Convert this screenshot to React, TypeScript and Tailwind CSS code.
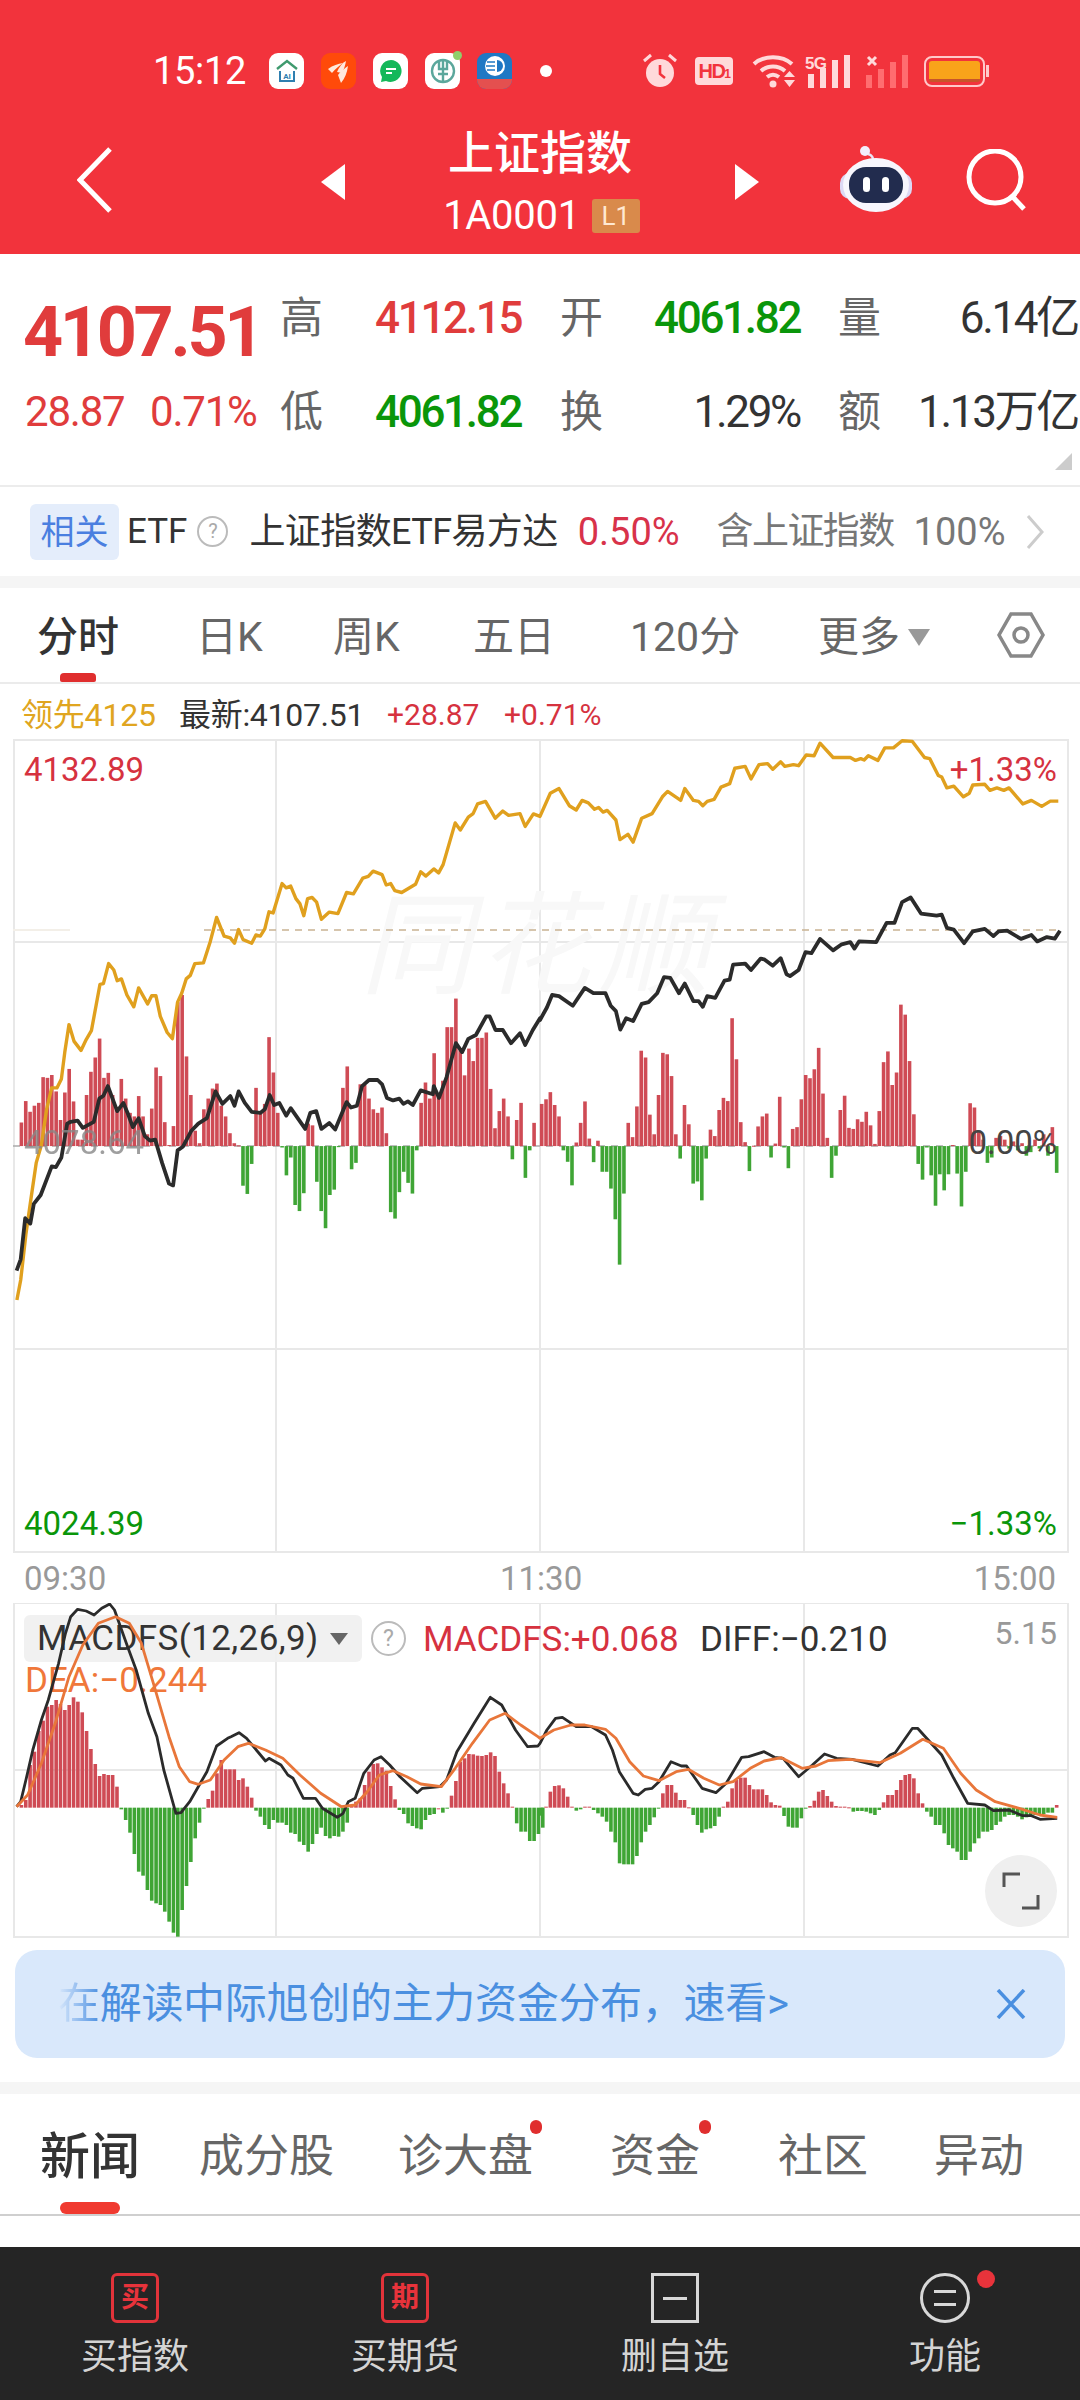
// Index quote detail page: header, quote table, intraday chart, MACD panel, tabs and action bar
type Pt = [number, number];

const FONT = "font-[Roboto,'Noto_Sans_CJK_SC',sans-serif]";

// chart traces are read off the picture in two halves, left half starts at x=0 and right half at x=540
const goldL: Pt[] = [[49,1624],[60,1568],[75,1440],[90,1340],[105,1240],[120,1190],[135,1090],[150,1030],[165,1030],[178,1005],[188,930],[200,853],[215,900],[235,925],[250,895],[265,870],[290,740],[300,738],[315,682],[330,700],[340,730],[352,725],[368,770],[388,803],[402,750],[428,795],[440,772],[452,772],[465,830],[485,875],[500,892],[515,790],[527,765],[540,725],[552,715],[565,682],[590,680],[610,620],[628,553],[650,605],[668,610],[680,625],[692,587],[705,615],[730,625],[742,602],[755,605],[768,585],[780,537],[792,540],[818,458],[830,470],[843,465],[858,500],[870,515],[881,548],[892,500],[905,497],[918,510],[932,558],[955,538],[980,542],[1005,483],[1025,487],[1052,443],[1068,438],[1082,423],[1108,433],[1120,462],[1133,458],[1145,478],[1165,483],[1205,460],[1220,425],[1235,437],[1258,417],[1272,428],[1285,405],[1320,288],[1335,308],[1358,272],[1372,262],[1385,235],[1408,228],[1436,275],[1458,255],[1475,267],[1508,262],[1523,298],[1547,263],[1566,270]];
const goldR: Pt[] = [[0,270],[30,205],[55,192],[85,240],[105,252],[122,225],[140,232],[158,250],[170,245],[183,258],[195,253],[220,280],[232,335],[255,320],[270,342],[295,275],[325,262],[355,215],[370,200],[408,225],[420,192],[445,225],[460,228],[472,240],[485,228],[505,222],[525,188],[550,178],[565,135],[595,130],[612,165],[635,125],[660,122],[675,138],[698,117],[710,130],[735,125],[750,128],[772,98],[795,100],[812,65],[850,105],[900,105],[915,113],[930,108],[940,112],[952,100],[980,113],[1000,78],[1025,78],[1050,58],[1080,60],[1115,105],[1130,108],[1155,155],[1165,160],[1180,190],[1200,185],[1228,215],[1245,205],[1255,182],[1290,180],[1305,197],[1325,190],[1345,197],[1360,190],[1400,235],[1425,225],[1455,242],[1480,227],[1503,227]];
const blackL: Pt[] = [[48,1542],[60,1510],[73,1395],[88,1410],[98,1355],[118,1330],[150,1250],[162,1252],[178,1225],[195,1130],[205,1125],[225,1122],[240,1142],[272,1125],[288,1060],[300,1052],[313,1025],[340,1095],[358,1072],[370,1100],[385,1140],[402,1115],[420,1165],[435,1178],[450,1175],[470,1240],[490,1298],[502,1303],[515,1205],[530,1195],[555,1150],[575,1130],[600,1115],[625,1040],[645,1075],[668,1053],[680,1080],[692,1040],[710,1072],[730,1097],[755,1100],[768,1090],[782,1050],[795,1078],[810,1072],[830,1108],[843,1087],[885,1145],[900,1100],[917,1095],[932,1145],[955,1128],[972,1147],[1005,1070],[1018,1085],[1035,1080],[1050,1025],[1070,1008],[1095,1008],[1108,1020],[1122,1058],[1140,1065],[1158,1060],[1170,1075],[1183,1068],[1197,1078],[1220,1037],[1255,1048],[1258,1025],[1273,1058],[1295,1000],[1322,905],[1340,930],[1358,893],[1380,882],[1410,830],[1420,830],[1437,868],[1458,868],[1482,905],[1508,877],[1523,910],[1545,868],[1566,835]];
const blackR: Pt[] = [[0,840],[20,805],[35,770],[55,773],[95,800],[130,750],[155,765],[190,765],[205,800],[220,815],[233,867],[250,835],[270,843],[295,795],[315,790],[340,765],[360,720],[378,722],[403,765],[420,738],[445,787],[460,787],[472,803],[485,773],[508,778],[535,730],[550,727],[560,685],[595,682],[612,700],[640,668],[650,670],[675,688],[698,667],[715,712],[725,717],[750,700],[770,650],[787,653],[812,613],[850,645],[875,628],[900,622],[912,640],[925,620],[975,622],[1005,568],[1028,568],[1050,510],[1075,497],[1105,542],[1150,548],[1165,545],[1180,582],[1200,587],[1230,625],[1255,592],[1290,585],[1315,605],[1330,592],[1355,590],[1395,613],[1425,602],[1442,620],[1470,608],[1493,612],[1508,590]];

// bar tops in the same crop units, a negative number is a bar going down
const volL = [1127,1067,1097,1080,1072,1000,1002,994,1040,1120,1043,977,1068,1175,1175,1050,985,945,892,1002,988,1050,1090,1005,1060,1100,1110,1053,1110,1160,1088,973,997,1126,1190,1137,790,770,942,1050,1150,1185,1090,1060,1032,1018,1080,1110,1157,1185,1191,-1304,-1327,-1243,1030,1100,1075,888,987,1100,-1197,-1275,-1225,-1358,-1375,-1325,1130,1135,-1293,-1375,-1423,-1330,-1315,-1196,1030,970,-1258,-1240,1020,1022,1060,1090,1100,1085,1157,-1378,-1396,-1322,-1265,-1296,-1326,-1205,1072,1015,1060,933,1045,1010,860,860,780,925,995,920,955,890,890,875,1033,1143,1095,1060,1110,-1230,1120,1072,-1282,-1205,1128];
const volR = [1075,1062,1042,1078,1110,-1205,-1237,-1303,1183,1128,1068,1172,-1238,1178,-1265,-1265,-1312,-1398,-1525,-1326,1128,1168,1082,926,945,1105,1160,1050,932,936,997,1160,-1228,1078,1132,-1298,-1292,-1345,-1228,1147,1165,1092,1058,1067,835,950,1126,1182,-1263,1192,1138,1110,1102,-1225,1186,1055,-1197,-1255,1145,1140,1062,994,1003,978,918,1046,1170,-1282,-1220,1092,1052,1142,1145,1118,1125,1097,1135,1187,1095,958,928,1022,987,797,825,955,1104,-1243,-1287,-1197,-1275,-1360,-1272,-1317,-1272,1190,-1270,-1362,-1265,1073,1085,1150,1175,-1240,-1225,1170,1165,1175,-1200,1180,-1205,1185,-1220,-1210,1175,-1200,1160,-1220,1140,-1268];

const macdBlackL: Pt[] = [[48,830],[60,815],[75,750],[95,660],[120,570],[140,510],[170,400],[190,310],[205,260],[225,238],[250,243],[273,255],[295,235],[318,222],[332,240],[370,350],[395,420],[430,550],[455,620],[475,720],[510,850],[525,848],[550,815],[600,725],[628,648],[660,625],[670,620],[693,608],[715,625],[770,693],[780,685],[815,705],[835,735],[850,745],[880,805],[915,805],[935,835],[978,862],[995,850],[1010,815],[1030,805],[1055,730],[1085,690],[1105,680],[1130,705],[1160,740],[1210,788],[1225,775],[1275,770],[1295,750],[1325,665],[1375,580],[1422,502],[1455,525],[1495,600],[1530,650],[1560,648]];
const macdBlackR: Pt[] = [[0,640],[20,600],[45,565],[65,562],[105,590],[150,590],[190,615],[210,660],[230,725],[270,790],[285,795],[305,778],[325,775],[345,755],[380,695],[410,708],[425,708],[470,775],[510,788],[540,760],[585,682],[605,680],[650,665],[680,682],[705,685],[750,740],[790,705],[825,672],[860,685],[905,688],[980,708],[1015,675],[1030,668],[1080,595],[1095,595],[1165,675],[1200,745],[1240,820],[1290,825],[1315,842],[1360,840],[1400,857],[1425,857],[1450,868],[1500,865]];
const macdOrangeL: Pt[] = [[48,830],[80,795],[120,700],[160,580],[200,440],[240,345],[285,280],[335,260],[375,280],[410,340],[445,460],[490,620],[520,710],[550,755],[575,763],[610,750],[650,690],[690,650],[720,640],[770,660],[820,685],[870,735],[930,790],[990,830],[1030,825],[1065,785],[1100,735],[1140,722],[1180,740],[1220,762],[1280,770],[1320,715],[1370,640],[1420,570],[1465,550],[1510,585],[1560,620]];
const macdOrangeR: Pt[] = [[0,625],[40,600],[90,585],[130,585],[190,598],[220,625],[260,695],[300,738],[345,752],[395,725],[430,718],[475,745],[520,765],[560,755],[610,715],[650,693],[700,683],[760,715],[800,708],[835,692],[900,688],[985,698],[1045,670],[1110,628],[1170,655],[1220,730],[1265,780],[1320,815],[1390,835],[1450,855],[1500,862]];

const macdBarsL = [825,810,705,665,603,572,530,525,510,522,540,525,502,515,547,603,657,702,738,732,735,735,770,-838,-870,-908,-972,-1025,-1037,-1080,-1112,-1120,-1125,-1145,-1175,-1208,-1220,-1140,-1068,-996,-925,-878,-836,807,782,730,690,718,718,718,750,745,770,803,-842,-860,-885,-897,-870,-878,-878,-885,-908,-912,-935,-945,-965,-942,-912,-893,-918,-925,-918,-920,-905,-878,825,815,805,765,725,702,700,712,722,768,808,-840,-852,-880,-888,-895,-898,-870,-855,-852,835,-848,-836,797,753,695,685,672,673,677,678,675,667,678,725,760,790,830,-880,-905,-905,-933,-933,-912,-893];
const macdBarsR = [-857,830,785,768,766,775,800,830,-842,-838,830,830,-840,-850,-860,-875,-905,-937,-1000,-1003,-1003,-1003,-978,-937,-905,-885,-862,-836,790,765,765,788,810,810,832,-855,-885,-908,-898,-895,-888,-860,830,815,775,750,743,743,765,778,778,778,795,817,825,827,-858,-890,-893,-893,-865,-835,828,812,785,780,798,815,828,830,830,832,-845,-843,-843,-845,-850,-855,-840,817,795,795,780,750,735,732,745,790,820,-845,-860,-885,-885,-910,-945,-955,-965,-990,-990,-965,-940,-925,-905,-905,-900,-885,-875,-860,-855,-855,-860,-868,-862,-855,-855,-855,-852,-848,-848,825];

const trace = (left: Pt[], right: Pt[], oy: number, sy: number) =>
  [
    ...left.map(([x, y]) => `${(x / 2.9).toFixed(1)},${(oy + y / sy).toFixed(1)}`),
    ...right.map(([x, y]) => `${(540 + x / 2.9).toFixed(1)},${(oy + y / sy).toFixed(1)}`),
  ].join(' ');

function Bars({ tops, startX, step, oy, sy, base }: { tops: number[]; startX: number; step: number; oy: number; sy: number; base: number }) {
  const baseY = oy + base / sy;
  return (
    <>
      {tops.map((v, i) => {
        const x = startX + (i * step) / 2.9 - 1.8;
        const down = v < 0;
        const edge = oy + Math.abs(v) / sy;
        return (
          <rect
            key={i}
            x={x}
            y={down ? baseY : edge}
            width={3.6}
            height={Math.max(1, Math.abs(edge - baseY))}
            fill={down ? '#3fa535' : '#cf4b55'}
          />
        );
      })}
    </>
  );
}

function GridLines({ top, bottom, rows }: { top: number; bottom: number; rows: number[] }) {
  return (
    <g stroke="#e8e8e8" strokeWidth={2} fill="none">
      <rect x={14} y={top} width={1054} height={bottom - top} />
      {[276, 540, 804].map((x) => (
        <line key={x} x1={x} x2={x} y1={top} y2={bottom} />
      ))}
      {rows.map((y) => (
        <line key={y} x1={14} x2={1068} y1={y} y2={y} />
      ))}
    </g>
  );
}

function AppIcons() {
  return (
    <div className="flex items-center gap-[17px] ml-[24px]">
      <div className="w-[35px] h-[36px] rounded-[9px] bg-white flex items-center justify-center">
        <svg width="28" height="28" viewBox="0 0 28 28" fill="none">
          <path d="M4 12 14 4l10 8" stroke="#3f9a6e" strokeWidth="2.4" />
          <path d="M7 14v10h14V14" stroke="#2f7fb0" strokeWidth="2" />
          <text x="14" y="22" textAnchor="middle" fontSize="8" fontWeight="700" fill="#2f7fb0">AI</text>
        </svg>
      </div>
      <div className="w-[35px] h-[36px] rounded-[9px] bg-[#ff4a0a] flex items-center justify-center">
        <svg width="26" height="28" viewBox="0 0 26 28" fill="#ffe9dc">
          <path d="M2 12c5-4 10-5 15-6-4 3-8 6-11 10z" />
          <path d="M11 15c2-5 5-9 9-11-1 5-2 8-4 12z" />
          <path d="M12 18c3-4 6-6 10-9-1 7-3 12-7 17z" />
        </svg>
      </div>
      <div className="w-[35px] h-[36px] rounded-[9px] bg-white flex items-center justify-center">
        <svg width="26" height="26" viewBox="0 0 26 26">
          <path d="M13 2a11 11 0 1 1-5 21l-5 1 1-5A11 11 0 0 1 13 2z" fill="#14b85a" />
          <path d="M8 11h10M8 15h6" stroke="#fff" strokeWidth="2" />
        </svg>
      </div>
      <div className="relative w-[35px] h-[36px] rounded-[9px] bg-white flex items-center justify-center">
        <svg width="30" height="30" viewBox="0 0 30 30" fill="none" stroke="#5ba79c" strokeWidth="2.4">
          <circle cx="15" cy="15" r="11" />
          <path d="M11 5v8h8V5M15 5v21M10 18h10" />
        </svg>
        <div className="absolute top-[-2px] right-[-2px] w-[9px] h-[9px] rounded-full bg-[#8fce6a]" />
      </div>
      <div className="w-[35px] h-[36px] rounded-[9px] bg-[#1f78c4] flex flex-col items-center justify-between overflow-hidden">
        <svg width="28" height="26" viewBox="0 0 28 26">
          <circle cx="14" cy="13" r="10" fill="#fff" />
          <path d="M16 7a6 6 0 0 1 0 12z" fill="#1f78c4" />
          <path d="M6 9h8M5 13h9M6 17h8" stroke="#1f78c4" strokeWidth="1.4" />
        </svg>
        <div className="w-full h-[10px] bg-[#e4504f]" />
      </div>
      <div className="w-[12px] h-[12px] rounded-full bg-white ml-[11px]" />
    </div>
  );
}

function SystemIcons() {
  return (
    <div className="flex items-center ml-[90px]">
      <svg width="36" height="38" viewBox="0 0 36 38" fill="#ffd9da">
        <circle cx="18" cy="21" r="14" />
        <path d="M18 13v9l5 4" stroke="#f2333c" strokeWidth="2.6" fill="none" />
        <path d="M2 9 9 3M34 9l-7-6" stroke="#ffd9da" strokeWidth="3" />
      </svg>
      <div className="ml-[17px] w-[38px] h-[28px] rounded-[4px] bg-[#ffd9da] flex items-center justify-center text-[20px] font-bold text-[#f2333c] leading-none tracking-[-1.5px] font-['Liberation_Sans',sans-serif]">
        HD<span className="text-[12px] mt-[6px]">1</span>
      </div>
      <svg className="ml-[19px]" width="44" height="34" viewBox="0 0 44 34" fill="none" stroke="#ffd9da">
        <path d="M2 10c10-9 28-9 38 0" strokeWidth="4" />
        <path d="M9 17c7-6 17-6 24 0" strokeWidth="4" />
        <path d="M15 23c4-3 8-3 12 0" strokeWidth="4" />
        <circle cx="21" cy="30" r="3.5" fill="#ffd9da" stroke="none" />
        <path d="M32 23h11l-5.500-6zM32 26h11l-5.500 7z" fill="#ffd9da" stroke="none" />
      </svg>
      <svg className="ml-[9px]" width="46" height="34" viewBox="0 0 46 34" fill="#ffd9da">
        <text x="0" y="15" fontSize="17" fontWeight="700" fontFamily="'Liberation Sans',sans-serif" textLength="22">5G</text>
        <rect x="3" y="20" width="6" height="14" />
        <rect x="15" y="14" width="6" height="20" />
        <rect x="27" y="6" width="6" height="28" />
        <rect x="39" y="1" width="6" height="33" />
      </svg>
      <svg className="ml-[14px]" width="44" height="34" viewBox="0 0 44 34" fill="#ff6d70">
        <path d="M3 3l8 8M11 3l-8 8" stroke="#ffd9da" strokeWidth="3" />
        <rect x="1" y="21" width="6" height="13" />
        <rect x="13" y="15" width="6" height="19" />
        <rect x="25" y="8" width="6" height="26" />
        <rect x="37" y="1" width="6" height="33" />
      </svg>
      <div className="ml-[15px] flex items-center">
        <div className="w-[61px] h-[31px] rounded-[8px] border-[2px] border-[#ffc9ca] p-[3px]">
          <div className="w-full h-full rounded-[3px] bg-[#f9a31a] border-b-[3px] border-[#c8542a]" />
        </div>
        <div className="w-[3px] h-[12px] bg-[#ffc9ca] ml-[1px]" />
      </div>
    </div>
  );
}

function Header() {
  return (
    <div className="h-[254px] bg-[#f2333c] shrink-0">
      <div className="h-[38px] relative top-[52px] flex items-center pl-[153px]">
        <span className="text-[38px] text-white leading-none w-[92px] tracking-[-0.3px] whitespace-nowrap">15:12</span>
        <AppIcons />
        <SystemIcons />
      </div>
      <div className="mt-[100px] h-[154px] relative top-[-38px] flex items-center pl-[77px]">
        <svg className="mt-[6px]" width="36" height="66" viewBox="0 0 36 66" fill="none" stroke="#fff" strokeWidth="5">
          <path d="M33 2 3 33l30 31" />
        </svg>
        <div className="ml-[208px] w-0 h-0 mt-[10px] border-y-[18px] border-y-transparent border-r-[24px] border-r-white" />
        <div className="w-[390px] flex flex-col items-center pt-[1px]">
          <div className="text-[46px] leading-[62px] text-white font-medium">上证指数</div>
          <div className="flex items-center h-[36px] mt-[14px] pl-[3px]">
            <span className="text-[40px] text-white leading-none tracking-[-0.3px]">1A0001</span>
            <span className="ml-[12px] w-[48px] h-[34px] rounded-[3px] bg-[#d98a4b] text-[#ffe8d2] text-[26px] leading-[34px] text-center">L1</span>
          </div>
        </div>
        <div className="w-0 h-0 mt-[10px] border-y-[18px] border-y-transparent border-l-[24px] border-l-white" />
        <svg className="ml-[81px] mt-[4px]" width="72" height="68" viewBox="0 0 72 68">
          <path d="M34 18c-1-6-2-8-6-9" stroke="#e9e4f5" strokeWidth="2.500" fill="none" />
          <circle cx="25" cy="6" r="5" fill="#f3eefc" />
          <rect x="0" y="28" width="72" height="26" rx="10" fill="#dcd8f4" />
          <ellipse cx="36" cy="40" rx="33" ry="27" fill="#f7f6fd" />
          <rect x="9" y="22" width="54" height="36" rx="17" fill="#222c4e" />
          <rect x="23" y="32" width="7" height="15" rx="3.500" fill="#fff" />
          <rect x="42" y="32" width="7" height="15" rx="3.500" fill="#fff" />
        </svg>
        <svg className="ml-[54px] mt-[6px]" width="62" height="62" viewBox="0 0 62 62" fill="none" stroke="#fff" strokeWidth="5">
          <circle cx="29" cy="28" r="26" />
          <path d="M46 47l12 13" />
        </svg>
      </div>
    </div>
  );
}

function QuoteTable() {
  const label = 'text-[43px] text-[#666] leading-none';
  const value = 'text-[44px] leading-none tracking-[-2.3px]';
  return (
    <div className="relative h-[231px] shrink-0 bg-white flex pt-[17px]">
      <div className="w-[280px] pl-[23px]">
        <div className="h-[122px] flex items-center text-[70px] font-bold text-[#e03c3c] tracking-[-3.3px] leading-none">4107.51</div>
        <div className="h-[38px] flex items-center text-[#e03c3c] text-[42px] leading-none tracking-[-1.2px]">
          <span className="w-[127px] pl-[2px]">28.87</span>
          <span>0.71%</span>
        </div>
      </div>
      <div className="grid grid-cols-[95px_185px_94px_184px_60px_182px] grid-rows-[94px_94px] items-center">
        <span className={label}>高</span>
        <span className={`${value} font-medium text-[#e03c3c]`}>4112.15</span>
        <span className={label}>开</span>
        <span className={`${value} font-medium text-[#0a960a]`}>4061.82</span>
        <span className={label}>量</span>
        <span className={`${value} text-[#333] text-right pr-[2px]`}>6.14亿</span>
        <span className={label}>低</span>
        <span className={`${value} font-medium text-[#0a960a]`}>4061.82</span>
        <span className={label}>换</span>
        <span className={`${value} text-[#333] text-right pr-[38px]`}>1.29%</span>
        <span className={label}>额</span>
        <span className={`${value} text-[#333] text-right pr-[2px] whitespace-nowrap`}>1.13万亿</span>
      </div>
      <div className="absolute right-[8px] bottom-[15px] w-0 h-0 border-b-[17px] border-b-[#ccc] border-l-[17px] border-l-transparent" />
    </div>
  );
}

function RelatedRow() {
  return (
    <div className="h-[91px] shrink-0 bg-white border-t-2 border-[#ececec] flex items-center pl-[30px] text-[36px] leading-none whitespace-nowrap">
      <span className="w-[89px] h-[56px] rounded-[6px] bg-[#e4edfb] text-[#4a7fe0] text-[34px] leading-[56px] text-center">相关</span>
      <span className="ml-[8px] text-[#333] text-[35px]">ETF</span>
      <span className="ml-[10px] w-[31px] h-[31px] rounded-full border-2 border-[#bbb] text-[#aaa] text-[20px] leading-[27px] text-center">?</span>
      <span className="ml-[21px] text-[#333] tracking-[-0.6px]">上证指数ETF易方达</span>
      <span className="ml-[20px] text-[38px] text-[#d8324a]">0.50%</span>
      <span className="ml-[37px] text-[#777] text-[37px] tracking-[-1.6px]">含上证指数</span>
      <span className="ml-[20px] text-[38px] text-[#777]">100%</span>
      <svg className="ml-[20px]" width="18" height="36" viewBox="0 0 18 36" fill="none" stroke="#ccc" strokeWidth="3">
        <path d="M2 2l14 16L2 34" />
      </svg>
    </div>
  );
}

function PeriodTabs() {
  return (
    <div className="relative h-[96px] shrink-0 bg-white border-b-2 border-[#ebebeb] grid grid-cols-[159px_137px_140px_157px_188px_179px_auto] items-center pl-[37px] pt-[5px] text-[41px] text-[#666] leading-none whitespace-nowrap">
      <span className="text-[#333] font-medium">分时</span>
      <span>日K</span>
      <span>周K</span>
      <span>五日</span>
      <span>120分</span>
      <span className="flex items-center">
        更多
        <span className="ml-[8px] w-0 h-0 border-x-[11px] border-x-transparent border-t-[17px] border-t-[#999]" />
      </span>
      <svg className="mt-[-5px]" width="48" height="46" viewBox="0 0 48 46" fill="none" stroke="#888" strokeWidth="3.500">
        <path d="M14 2h20l12 21-12 21H14L2 23z" />
        <circle cx="24" cy="23" r="7" />
      </svg>
      <div className="absolute left-[60px] bottom-0 w-[36px] h-[9px] rounded-t-[4px] rounded-b-[2px] bg-[#e02e2e]" />
    </div>
  );
}

function MainChart() {
  const label = 'absolute text-[33px] leading-none';
  return (
    <div className="relative ml-[13px] w-[1056px] h-[814px] shrink-0">
      <svg className="absolute inset-0" width="1056" height="814" viewBox="13 739 1056 814">
        <GridLines top={740} bottom={1552} rows={[942, 1349]} />
        <text x="360" y="985" fontSize="112" fontStyle="italic" fill="#f8f8f8" fontFamily="'Noto Sans CJK SC',sans-serif" textLength="350">同花顺</text>
        <line x1={13} x2={70} y1={930} y2={930} stroke="#f3efe8" strokeWidth={2} />
        <line x1={204} x2={1056} y1={930} y2={930} stroke="#c9b393" strokeWidth={1.5} strokeDasharray="7 6" />
        <line x1={13} x2={1056} y1={1146} y2={1146} stroke="#aaa" strokeWidth={1.5} strokeDasharray="7 6" />
        <Bars tops={volL} startX={21.4} step={12.6} oy={720} sy={2.8} base={1193} />
        <Bars tops={volR} startX={541.7} step={12.55} oy={720} sy={2.8} base={1193} />
        <polyline points={trace(goldL, goldR, 720, 2.8)} fill="none" stroke="#e0a01e" strokeWidth={3.4} strokeLinejoin="round" />
        <polyline points={trace(blackL, blackR, 720, 2.8)} fill="none" stroke="#2b2b2b" strokeWidth={3.8} strokeLinejoin="round" />
      </svg>
      <span className={`${label} left-[11px] top-[14px] text-[#d6323f]`}>4132.89</span>
      <span className={`${label} right-[12px] top-[14px] text-[#d6323f]`}>+1.33%</span>
      <span className={`${label} left-[11px] top-[387px] text-[#888] opacity-80`}>4078.64</span>
      <span className={`${label} right-[12px] top-[387px] text-[#444]`}>0.00%</span>
      <span className={`${label} left-[11px] top-[768px] text-[#0a960a]`}>4024.39</span>
      <span className={`${label} right-[12px] top-[768px] text-[#0a960a]`}>−1.33%</span>
    </div>
  );
}

function MacdChart() {
  return (
    <div className="relative ml-[13px] w-[1056px] h-[335px] shrink-0">
      <svg className="absolute inset-0" width="1056" height="335" viewBox="13 1603 1056 335">
        <GridLines top={1603} bottom={1937} rows={[1770]} />
        <Bars tops={macdBarsL} startX={21.4} step={12.6} oy={1530} sy={3} base={833} />
        <Bars tops={macdBarsR} startX={541.7} step={12.55} oy={1530} sy={3} base={833} />
      </svg>
      <div className="absolute left-[11px] top-[12px] w-[338px] h-[47px] rounded-[6px] bg-[#f0f0f0]/90 flex items-center pl-[13px] text-[35px] text-[#333] leading-none tracking-[0.4px]">
        MACDFS(12,26,9)
        <span className="absolute left-[306px] top-[18px] w-0 h-0 border-x-[9px] border-x-transparent border-t-[12px] border-t-[#666]" />
      </div>
      <span className="absolute left-[358px] top-[18px] w-[35px] h-[35px] rounded-full border-2 border-[#bbb] text-[#aaa] text-[23px] leading-[31px] text-center">?</span>
      <span className="absolute left-[410px] top-[19px] text-[35px] leading-none text-[#d6323f]">MACDFS:+0.068</span>
      <span className="absolute left-[687px] top-[19px] text-[35px] leading-none text-[#333]">DIFF:−0.210</span>
      <span className="absolute right-[12px] top-[14px] text-[32px] leading-none text-[#999]">5.15</span>
      <span className="absolute left-[12px] top-[60px] text-[35px] leading-none text-[#f0773a]">DEA:−0.244</span>
      <svg className="absolute inset-0 pointer-events-none" width="1056" height="335" viewBox="13 1603 1056 335">
        <polyline points={trace(macdBlackL, macdBlackR, 1530, 3)} fill="none" stroke="#2b2b2b" strokeWidth={2.8} strokeLinejoin="round" />
        <polyline points={trace(macdOrangeL, macdOrangeR, 1530, 3)} fill="none" stroke="#e8763a" strokeWidth={2.8} strokeLinejoin="round" />
      </svg>
      <div className="absolute left-[972px] top-[252px] w-[72px] h-[72px] rounded-full bg-[#efefef] flex items-center justify-center">
        <svg width="38" height="38" viewBox="0 0 38 38" fill="none" stroke="#555" strokeWidth="3">
          <path d="M2 15V2h16M36 23v13H20" />
        </svg>
      </div>
    </div>
  );
}

function Banner() {
  return (
    <div className="mx-[15px] mt-[12px] h-[108px] shrink-0 rounded-[22px] bg-[#d9e8fb] flex items-center pl-[43px] pr-[39px] justify-between">
      <span className="text-[42px] leading-none text-[#4a8fe0] whitespace-nowrap tracking-[-0.3px]">
        <span className="bg-gradient-to-r from-[#d9e8fb] to-[#4a8fe0] bg-clip-text text-transparent">在</span>解读中际旭创的主力资金分布，速看&gt;
      </span>
      <svg width="30" height="30" viewBox="0 0 30 30" fill="none" stroke="#4a8fe0" strokeWidth="3.500">
        <path d="M2 1l26 28M28 1 2 29" />
      </svg>
    </div>
  );
}

function NewsTabs() {
  const dot = 'absolute top-[-14px] w-[12px] h-[14px] rounded-full bg-[#e02e2e]';
  return (
    <div className="relative h-[122px] shrink-0 bg-white border-b-2 border-[#cfcfcf] grid grid-cols-[159px_199px_212px_168px_156px_auto] items-center pl-[40px] pt-[5px] text-[45px] text-[#666] leading-none whitespace-nowrap">
      <span className="text-[50px] text-[#333] font-medium">新闻</span>
      <span>成分股</span>
      <span className="relative w-[135px]">
        诊大盘
        <span className={`${dot} left-[132px]`} />
      </span>
      <span className="relative w-[90px]">
        资金
        <span className={`${dot} left-[89px]`} />
      </span>
      <span>社区</span>
      <span>异动</span>
      <div className="absolute left-[60px] bottom-0 w-[60px] h-[12px] rounded-[6px] bg-[#f03a30]" />
    </div>
  );
}

function BottomBar() {
  return (
    <div className="mt-[31px] h-[153px] shrink-0 bg-[#252525] grid grid-cols-4 pt-[26px] text-[36px] text-[#d4d4d4] leading-none text-center">
      <div className="flex flex-col items-center">
        <div className="w-[48px] h-[50px] rounded-[6px] border-[3px] border-[#e2333a] text-[#e8333b] text-[28px] font-bold leading-[44px]">买</div>
        <span className="mt-[16px]">买指数</span>
      </div>
      <div className="flex flex-col items-center">
        <div className="w-[48px] h-[50px] rounded-[6px] border-[3px] border-[#e2333a] text-[#e8333b] text-[28px] font-bold leading-[44px]">期</div>
        <span className="mt-[16px]">买期货</span>
      </div>
      <div className="flex flex-col items-center">
        <div className="w-[48px] h-[50px] border-[3px] border-[#d8d8d8] flex items-center justify-center">
          <div className="w-[24px] h-[3px] bg-[#d8d8d8]" />
        </div>
        <span className="mt-[16px]">删自选</span>
      </div>
      <div className="relative flex flex-col items-center">
        <div className="w-[50px] h-[50px] rounded-full border-[3px] border-[#d8d8d8] flex flex-col items-center justify-center gap-[10px]">
          <div className="w-[22px] h-[3px] bg-[#d8d8d8]" />
          <div className="w-[22px] h-[3px] bg-[#d8d8d8]" />
        </div>
        <div className="absolute left-[167px] top-[-3px] w-[18px] h-[18px] rounded-full bg-[#e8333b]" />
        <span className="mt-[16px]">功能</span>
      </div>
    </div>
  );
}

export default function App() {
  return (
    <div className={`${FONT} w-[1080px] h-[2400px] bg-white flex flex-col overflow-hidden`}>
      <Header />
      <QuoteTable />
      <RelatedRow />
      <div className="h-[12px] shrink-0 bg-[#f5f5f5]" />
      <PeriodTabs />
      <div className="h-[55px] shrink-0 flex items-center pl-[21px] pt-[7px] text-[30px] leading-none whitespace-nowrap">
        <span className="w-[158px] text-[32px] text-[#e0a520] tracking-[-0.2px]">领先4125</span>
        <span className="w-[208px] text-[32px] text-[#333] tracking-[-0.3px]">最新:4107.51</span>
        <span className="w-[117px] text-[#d6323f]">+28.87</span>
        <span className="text-[#d6323f]">+0.71%</span>
      </div>
      <MainChart />
      <div className="relative h-[50px] shrink-0 flex items-center justify-between px-[24px] text-[33px] text-[#999] leading-none">
        <span>09:30</span>
        <span className="absolute left-[500px]">11:30</span>
        <span>15:00</span>
      </div>
      <MacdChart />
      <Banner />
      <div className="mt-[24px] h-[12px] shrink-0 bg-[#f5f5f5]" />
      <NewsTabs />
      <BottomBar />
    </div>
  );
}
